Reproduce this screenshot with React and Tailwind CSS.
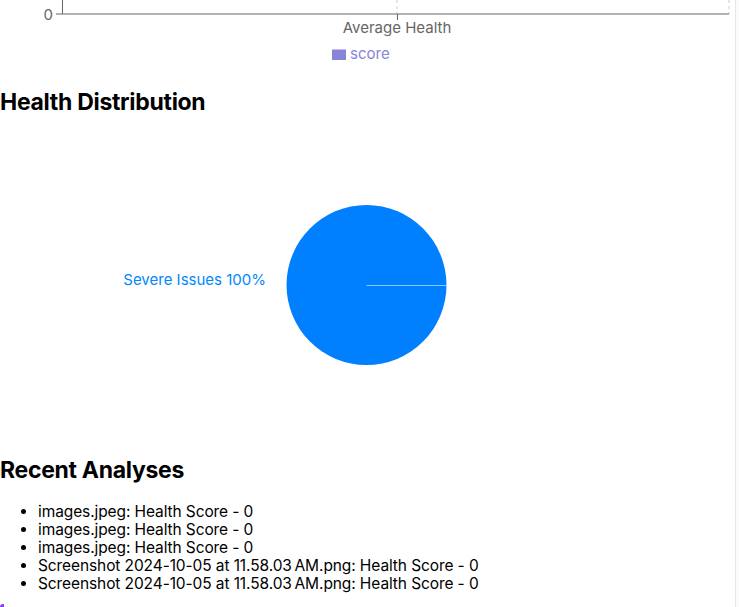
import React from 'react';

const analyses = [
  'images.jpeg: Health Score - 0',
  'images.jpeg: Health Score - 0',
  'images.jpeg: Health Score - 0',
  'Screenshot 2024-10-05 at 11.58.03\u2009AM.png: Health Score - 0',
  'Screenshot 2024-10-05 at 11.58.03\u2009AM.png: Health Score - 0',
];

function HealthBar() {
  return (
    <svg width="735" height="66" className="block">
      <line x1="397" y1="0" x2="397" y2="14" stroke="#ccc" strokeDasharray="3 3" />
      <line x1="729" y1="0" x2="729" y2="14" stroke="#ccc" strokeDasharray="3 3" />
      <line x1="62.5" y1="0" x2="62.5" y2="14" stroke="#666" />
      <line x1="62" y1="14" x2="729" y2="14" stroke="#666" />
      <line x1="56" y1="14" x2="62" y2="14" stroke="#666" />
      <line x1="397.5" y1="14" x2="397.5" y2="20" stroke="#666" />
      <text x="53" y="19.5" textAnchor="end" fill="#666" fontSize="15">0</text>
      <text x="397" y="32.5" textAnchor="middle" fill="#666" fontSize="15">Average Health</text>
      <rect x="332" y="49.5" width="14" height="10.5" fill="#8884d8" />
      <text x="350" y="59" fill="#8884d8" fontSize="15">score</text>
    </svg>
  );
}

function HealthPie() {
  return (
    <svg width="732" height="330" className="block">
      <circle cx="366.5" cy="169" r="80" fill="#0080FE" />
      <line x1="366.5" y1="169.5" x2="446.5" y2="169.5" stroke="#fff" strokeOpacity="0.55" />
      <text x="266" y="169" textAnchor="end" fill="#0088FE" fontSize="15">Severe Issues 100%</text>
    </svg>
  );
}

export default function App() {
  return (
    <div className="flex min-h-[607px] bg-white text-black font-['Inter',sans-serif]">
      <div className="flex-1 border-r border-[#e6e6e6] overflow-hidden">
        <HealthBar />
        <h2 className="mt-[22px] text-[23px] leading-[28px] font-bold tracking-[-0.3px]">Health Distribution</h2>
        <HealthPie />
        <h2 className="mt-[10px] text-[23px] leading-[28px] font-bold tracking-[-0.3px]">Recent Analyses</h2>
        <ul className="mt-[19px] list-disc pl-[38px] text-[15.5px] leading-[18px] tracking-[-0.1px]">
          {analyses.map((a, i) => (
            <li key={i}>{a}</li>
          ))}
        </ul>
        <div className="mt-[11px] w-[4px] h-[6px] bg-[#8a3ffc] rounded-tl-[3px]" />
      </div>
      <div className="w-[3px] bg-[#fafafa]" />
    </div>
  );
}
